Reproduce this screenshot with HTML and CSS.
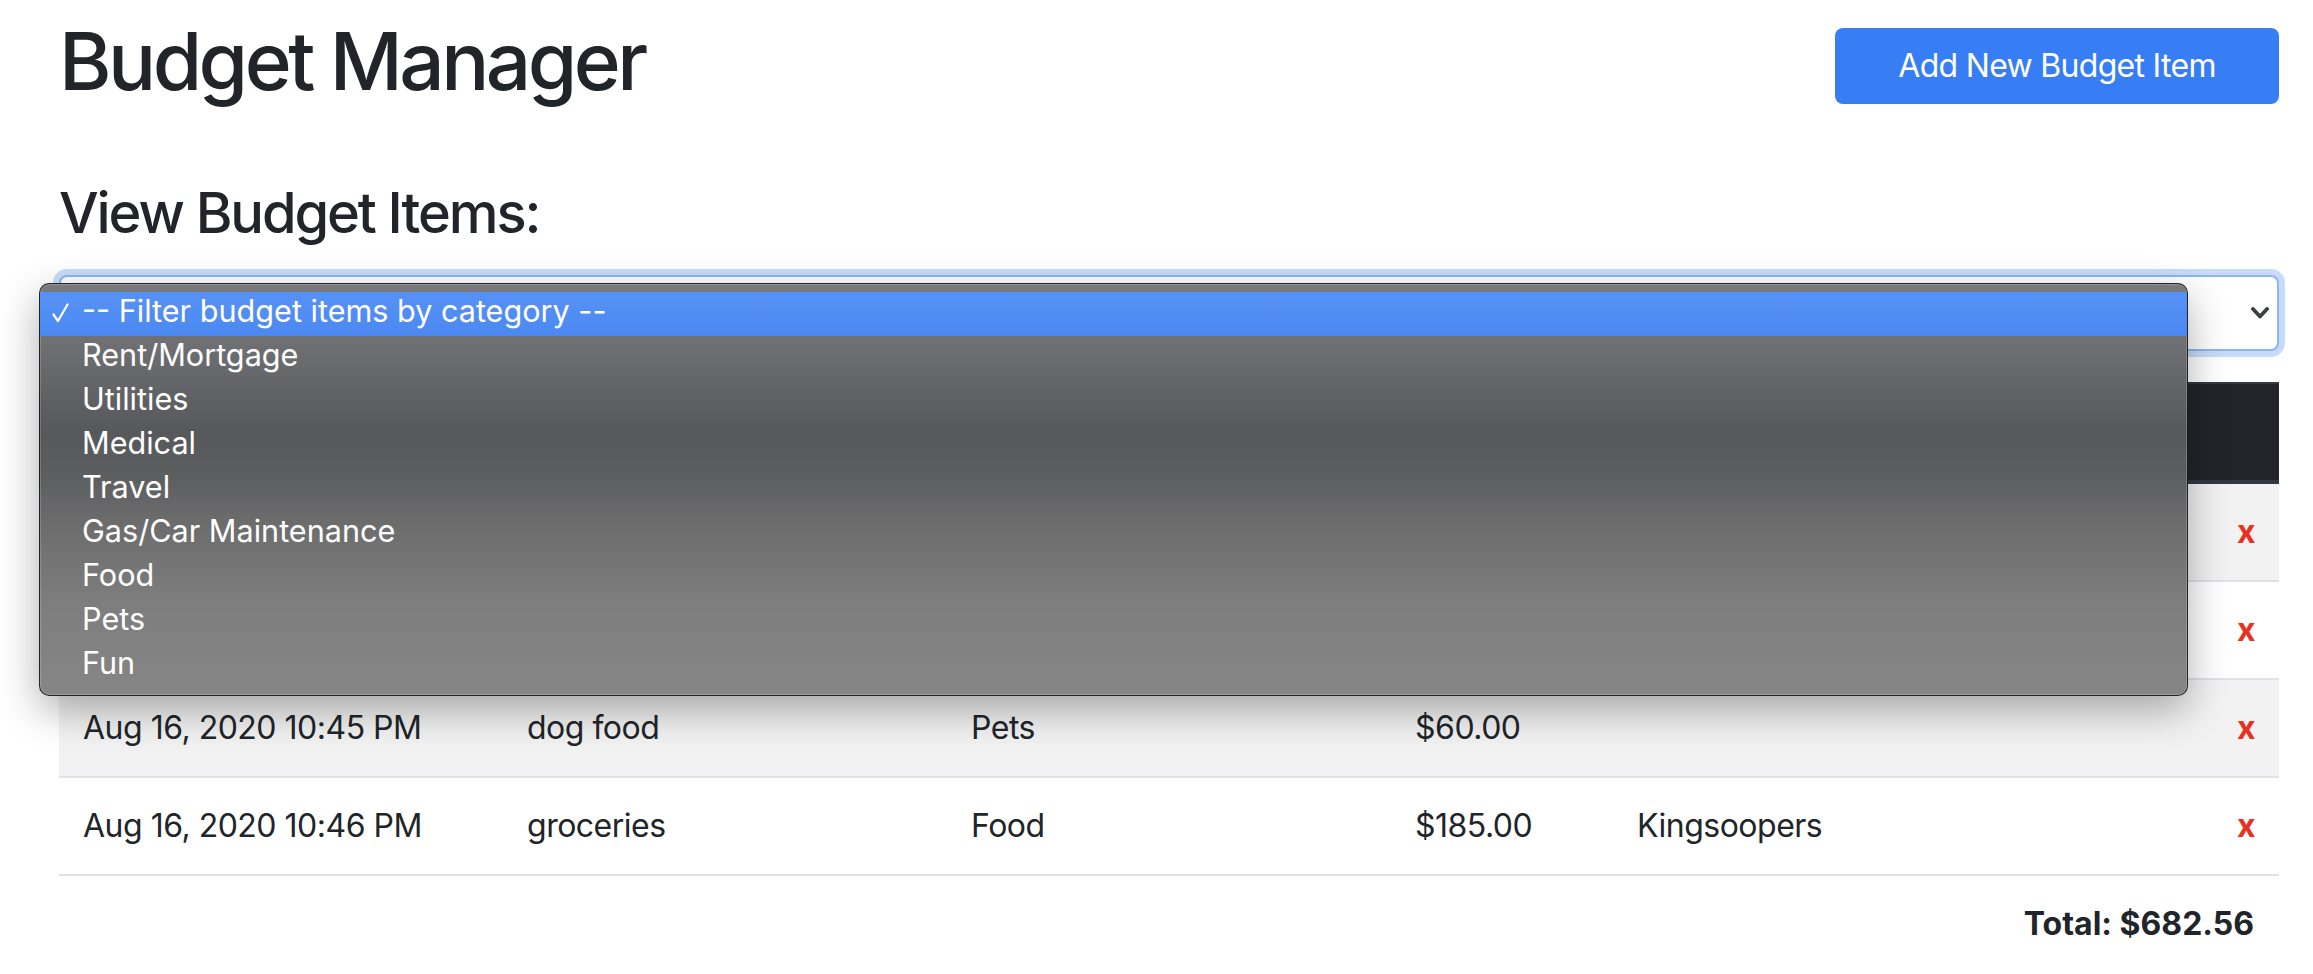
FILE: index.html
```html
<!DOCTYPE html>
<html lang="en">
<head>
<meta charset="utf-8">
<title>Budget Manager</title>
<link rel="stylesheet" href="styles.css">
</head>
<body>
<div class="page">
  <header class="top">
    <h1 class="title">Budget Manager</h1>
    <button class="add-btn" type="button">Add New Budget Item</button>
  </header>

  <h2 class="subtitle">View Budget Items:</h2>

  <div class="filter">
    <div class="select-box">
      <span class="select-text">-- Filter budget items by category --</span>
      <svg class="chevron" width="18" height="12" viewBox="0 0 18 12"><path d="M2 2 L9 9.5 L16 2" fill="none" stroke="#3c3f44" stroke-width="3.8" stroke-linecap="round" stroke-linejoin="round"/></svg>
    </div>
    <div class="menu">
      <div class="opt selected"><span class="check"><svg width="17" height="20" viewBox="0 0 17 20"><path d="M1.5 11.5 L6 18 L15.5 1.5" fill="none" stroke="#ffffff" stroke-width="2.2" stroke-linecap="round" stroke-linejoin="round"/></svg></span><span>-- Filter budget items by category --</span></div>
      <div class="opt"><span class="check"></span><span>Rent/Mortgage</span></div>
      <div class="opt"><span class="check"></span><span>Utilities</span></div>
      <div class="opt"><span class="check"></span><span>Medical</span></div>
      <div class="opt"><span class="check"></span><span>Travel</span></div>
      <div class="opt"><span class="check"></span><span>Gas/Car Maintenance</span></div>
      <div class="opt"><span class="check"></span><span>Food</span></div>
      <div class="opt"><span class="check"></span><span>Pets</span></div>
      <div class="opt"><span class="check"></span><span>Fun</span></div>
    </div>
  </div>

  <table class="items">
    <colgroup>
      <col class="c20"><col class="c20"><col class="c20"><col class="c10"><col class="c20"><col class="c10">
    </colgroup>
    <thead>
      <tr><th>Date</th><th>Description</th><th>Category</th><th>Amount</th><th>Location</th><th></th></tr>
    </thead>
    <tbody>
      <tr><td>Aug 16, 2020 10:41 PM</td><td>rent</td><td>Rent/Mortgage</td><td>$350.00</td><td>Landlord</td><td class="del">x</td></tr>
      <tr><td>Aug 16, 2020 10:43 PM</td><td>electric bill</td><td>Utilities</td><td>$87.56</td><td>Xcel Energy</td><td class="del">x</td></tr>
      <tr><td>Aug 16, 2020 10:45 PM</td><td>dog food</td><td>Pets</td><td>$60.00</td><td></td><td class="del">x</td></tr>
      <tr><td>Aug 16, 2020 10:46 PM</td><td>groceries</td><td>Food</td><td>$185.00</td><td>Kingsoopers</td><td class="del">x</td></tr>
    </tbody>
  </table>

  <p class="total">Total: $682.56</p>
</div>
</body>
</html>
```

FILE: styles.css
```css
html, body {
  margin: 0;
  padding: 0;
  background: #ffffff;
}

body {
  font-family: Inter, "Liberation Sans", sans-serif;
  font-size: 32px;
  line-height: 1.5;
  letter-spacing: -0.5px;
  color: #212529;
}

.page {
  padding: 13px 34px 0 59px;
}

.top {
  display: flex;
  justify-content: space-between;
  align-items: flex-start;
}

.title {
  margin: 0;
  font-size: 80px;
  font-weight: 500;
  line-height: 96px;
  letter-spacing: -3.5px;
}

.add-btn {
  margin-top: 15px;
  width: 444px;
  height: 76px;
  border: none;
  border-radius: 8px;
  background: #377ef5;
  color: #ffffff;
  font-family: inherit;
  font-size: 32px;
  line-height: 48px;
  letter-spacing: -0.7px;
  padding: 0;
}

.subtitle {
  margin: 71px 0 28px;
  font-size: 56px;
  font-weight: 500;
  line-height: 67px;
  letter-spacing: -2.1px;
}

.filter {
  position: relative;
}

.select-box {
  box-sizing: border-box;
  height: 76px;
  border: 2px solid #8ab6f3;
  border-radius: 8px;
  box-shadow: 0 0 0 6px #c8dcf9;
  display: flex;
  align-items: center;
  justify-content: space-between;
  padding: 0 8px 0 24px;
  background: #ffffff;
}

.select-text {
  color: #495057;
}

.chevron {
  display: block;
}

.menu {
  position: absolute;
  left: -20px;
  top: 8px;
  width: 2149px;
  height: 413px;
  box-sizing: border-box;
  padding: 8px 0;
  border: 1px solid rgba(20, 20, 20, 0.85);
  border-radius: 10px;
  background: linear-gradient(180deg, #7a7a7c 0%, #6f7073 14%, #56585b 36%, #5c5d5f 46%, #6b6b6c 57%, #7d7d7d 77%, #868686 100%);
  box-shadow: inset 0 0 0 1px rgba(255, 255, 255, 0.18), 0 14px 40px rgba(0, 0, 0, 0.32);
  color: #ffffff;
  font-size: 30.6px;
  letter-spacing: 0;
  z-index: 5;
  overflow: hidden;
}

.opt {
  display: flex;
  align-items: flex-start;
  height: 44px;
  line-height: 38px;
  padding-bottom: 6px;
  box-sizing: border-box;
  white-space: nowrap;
}

.opt.selected {
  background: linear-gradient(180deg, #5692f6, #4b88f1);
}

.check {
  flex: 0 0 30px;
  padding-left: 12px;
  height: 44px;
}

.check svg {
  display: block;
  margin-top: 11px;
}

.items {
  width: 100%;
  margin-top: 31px;
  border-collapse: collapse;
  table-layout: fixed;
}

.c20 { width: 20%; }
.c10 { width: 10%; }

.items th {
  background: #212529;
  color: #ffffff;
  text-align: left;
  font-weight: 700;
  padding: 24px;
  line-height: 48px;
  border-top: 2px solid #32383e;
  border-bottom: 4px solid #32383e;
}

.items td {
  padding: 24px;
  line-height: 48px;
  border-top: 2px solid #dee2e6;
  white-space: nowrap;
}

.items tbody tr:nth-child(odd) td {
  background: #f2f2f2;
}

.items tbody tr:last-child td {
  border-bottom: 2px solid #dee2e6;
}

.items td.del {
  text-align: right;
  color: #e8321f;
  font-weight: 700;
}

.total {
  margin: 24px 0 0;
  padding-right: 25px;
  text-align: right;
  font-weight: 700;
  line-height: 48px;
  letter-spacing: 0;
}
```
